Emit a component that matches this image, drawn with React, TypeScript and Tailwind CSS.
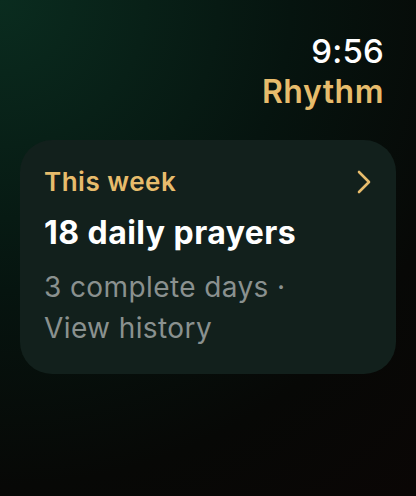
import React from 'react';

export default function App() {
  return (
    <div
      className="w-[416px] h-[496px] overflow-hidden text-white bg-[radial-gradient(circle_at_0%_0%,#0a2c1f_0%,#06140f_45%,#070806_75%,#0a0605_100%)]"
      style={{ fontFamily: 'Inter, "Liberation Sans", sans-serif' }}
    >
      {/* Header */}
      <div className="flex flex-col items-end pr-[32px] pt-[31px]">
        <div className="text-[33px] leading-[40px] font-medium tracking-[0.2px]">9:56</div>
        <div className="text-[32px] leading-[40px] font-semibold tracking-[0.5px] text-[#e7bc6c] mt-[1px]">Rhythm</div>
      </div>

      {/* Weekly card */}
      <div className="mx-[20px] mt-[28px] h-[234px] rounded-[32px] bg-[#12201c] pl-[24px] pr-[26px] pt-[25px]">
        <div className="flex items-center justify-between">
          <div className="text-[26px] leading-[34px] font-semibold tracking-[0.5px] text-[#e7bc6c]">This week</div>
          <svg width="16" height="24" viewBox="0 0 16 24" fill="none" className="mr-[-2px]">
            <path d="M3 2 L13 12 L3 22" stroke="#e7bc6c" strokeWidth="2.6" strokeLinecap="round" strokeLinejoin="round" />
          </svg>
        </div>
        <div className="mt-[14px] text-[32px] leading-[40px] font-bold tracking-[0.45px]">18 daily prayers</div>
        <div className="mt-[14px] text-[28px] leading-[41px] tracking-[0.4px] text-[#8a918f] w-[270px]">
          3 complete days · View history
        </div>
      </div>
    </div>
  );
}
